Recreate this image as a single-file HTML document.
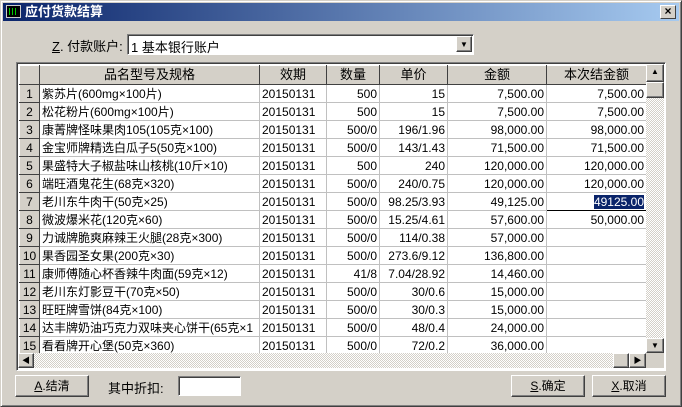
<!DOCTYPE html>
<html><head><meta charset="utf-8"><style>
*{box-sizing:border-box;margin:0;padding:0}
body{width:682px;height:407px;background:#d4d0c8;font-family:"Liberation Sans","Noto Sans CJK SC",sans-serif;font-size:12px;color:#000;position:relative;overflow:hidden}
.win{position:absolute;left:0;top:0;width:682px;height:407px;border:1px solid;border-color:#d4d0c8 #404040 #404040 #d4d0c8;box-shadow:inset 1px 1px #fff,inset -1px -1px #808080}
.title{position:absolute;left:3px;top:3px;width:676px;height:18px;background:linear-gradient(90deg,#0a246a,#a6caf0);color:#fff;font-weight:bold;font-size:13px;line-height:18px;padding-left:22px}
.ico{position:absolute;left:3px;top:2px;width:15px;height:13px;background:#000;border:1px solid #ccc}
.ico:after{content:"";position:absolute;left:2px;top:2px;width:9px;height:7px;background:repeating-linear-gradient(90deg,#0c0 0 1px,#000 1px 3px)}
.xb{position:absolute;right:3px;top:2px;width:16px;height:14px;background:#d4d0c8;border:1px solid;border-color:#fff #404040 #404040 #fff;color:#000;font-size:12px;line-height:11px;text-align:center;font-weight:bold}
.sunk{border:1px solid;border-color:#808080 #fff #fff #808080;box-shadow:inset 1px 1px #404040}
.btn{position:absolute;height:22px;background:#d4d0c8;border:1px solid;border-color:#fff #404040 #404040 #fff;box-shadow:inset -1px -1px #808080;text-align:center;line-height:20px}
.grid{position:absolute;left:16px;top:62px;width:650px;height:309px;background:#fff}
table{position:absolute;left:2px;top:2px;border-collapse:collapse;table-layout:fixed}
td,th{height:18px;border:1px solid #c0c0c0;white-space:nowrap;overflow:hidden;padding:0 2px;font-weight:normal;line-height:16px}
th{background:#d4d0c8;border:1px solid;border-color:#fff #404040 #404040 #fff;font-size:13px;height:19px}
td.n{background:#d4d0c8;border:1px solid;border-color:#fff #404040 #404040 #fff;text-align:center}
td.r{text-align:right}
.chk{background:repeating-conic-gradient(#d4d0c8 0 25%,#fff 0 50%) 0 0/2px 2px}
.sb{position:absolute;background:#d4d0c8;border:1px solid;border-color:#fff #404040 #404040 #fff;box-shadow:inset -1px -1px #808080;font-size:8px;text-align:center;line-height:14px}
</style></head><body>
<div class="win"></div>
<div class="title"><div class="ico"></div>应付货款结算<div class="xb">×</div></div>
<div style="position:absolute;left:52px;top:36px;font-size:13px"><u>Z</u>. 付款账户:</div>
<div class="sunk" style="position:absolute;left:127px;top:34px;width:347px;height:21px;background:#fff">
<span style="position:absolute;left:3px;top:2px;font-size:13px">1 基本银行账户</span>
<div class="sb" style="right:1px;top:1px;width:16px;height:16px;line-height:15px">▼</div></div>
<div class="grid sunk">
<table>
<colgroup><col style="width:20px"><col style="width:220px"><col style="width:67px"><col style="width:53px"><col style="width:68px"><col style="width:99px"><col style="width:100px"></colgroup>
<tr><th></th><th>品名型号及规格</th><th>效期</th><th>数量</th><th>单价</th><th>金额</th><th>本次结金额</th></tr>
<tr><td class="n">1</td><td>紫苏片(600mg×100片)</td><td>20150131</td><td class="r">500</td><td class="r">15</td><td class="r">7,500.00</td><td class="r">7,500.00</td></tr>
<tr><td class="n">2</td><td>松花粉片(600mg×100片)</td><td>20150131</td><td class="r">500</td><td class="r">15</td><td class="r">7,500.00</td><td class="r">7,500.00</td></tr>
<tr><td class="n">3</td><td>康菁牌怪味果肉105(105克×100)</td><td>20150131</td><td class="r">500/0</td><td class="r">196/1.96</td><td class="r">98,000.00</td><td class="r">98,000.00</td></tr>
<tr><td class="n">4</td><td>金宝师牌精选白瓜子5(50克×100)</td><td>20150131</td><td class="r">500/0</td><td class="r">143/1.43</td><td class="r">71,500.00</td><td class="r">71,500.00</td></tr>
<tr><td class="n">5</td><td>果盛特大子椒盐味山核桃(10斤×10)</td><td>20150131</td><td class="r">500</td><td class="r">240</td><td class="r">120,000.00</td><td class="r">120,000.00</td></tr>
<tr><td class="n">6</td><td>端旺酒鬼花生(68克×320)</td><td>20150131</td><td class="r">500/0</td><td class="r">240/0.75</td><td class="r">120,000.00</td><td class="r">120,000.00</td></tr>
<tr><td class="n">7</td><td>老川东牛肉干(50克×25)</td><td>20150131</td><td class="r">500/0</td><td class="r">98.25/3.93</td><td class="r">49,125.00</td><td class="r" style="border:1px solid #000"><span style="background:#0a246a;color:#fff">49125.00</span></td></tr>
<tr><td class="n">8</td><td>微波爆米花(120克×60)</td><td>20150131</td><td class="r">500/0</td><td class="r">15.25/4.61</td><td class="r">57,600.00</td><td class="r">50,000.00</td></tr>
<tr><td class="n">9</td><td>力诚牌脆爽麻辣王火腿(28克×300)</td><td>20150131</td><td class="r">500/0</td><td class="r">114/0.38</td><td class="r">57,000.00</td><td></td></tr>
<tr><td class="n">10</td><td>果香园圣女果(200克×30)</td><td>20150131</td><td class="r">500/0</td><td class="r">273.6/9.12</td><td class="r">136,800.00</td><td></td></tr>
<tr><td class="n">11</td><td>康师傅随心杯香辣牛肉面(59克×12)</td><td>20150131</td><td class="r">41/8</td><td class="r">7.04/28.92</td><td class="r">14,460.00</td><td></td></tr>
<tr><td class="n">12</td><td>老川东灯影豆干(70克×50)</td><td>20150131</td><td class="r">500/0</td><td class="r">30/0.6</td><td class="r">15,000.00</td><td></td></tr>
<tr><td class="n">13</td><td>旺旺牌雪饼(84克×100)</td><td>20150131</td><td class="r">500/0</td><td class="r">30/0.3</td><td class="r">15,000.00</td><td></td></tr>
<tr><td class="n">14</td><td>达丰牌奶油巧克力双味夹心饼干(65克×1</td><td>20150131</td><td class="r">500/0</td><td class="r">48/0.4</td><td class="r">24,000.00</td><td></td></tr>
<tr><td class="n">15</td><td>看看牌开心堡(50克×360)</td><td>20150131</td><td class="r">500/0</td><td class="r">72/0.2</td><td class="r">36,000.00</td><td></td></tr>
</table>
<div class="chk" style="position:absolute;left:629px;top:1px;width:18px;height:289px"></div>
<div class="sb" style="left:629px;top:1px;width:18px;height:18px">▲</div>
<div class="sb" style="left:629px;top:19px;width:18px;height:16px"></div>
<div class="sb" style="left:629px;top:275px;width:18px;height:15px">▼</div>
<div class="chk" style="position:absolute;left:1px;top:290px;width:628px;height:15px"></div>
<div class="sb" style="left:1px;top:290px;width:16px;height:15px">◀</div>
<div class="sb" style="left:596px;top:290px;width:16px;height:15px"></div>
<div class="sb" style="left:612px;top:290px;width:17px;height:15px">▶</div>
<div style="position:absolute;left:629px;top:290px;width:18px;height:15px;background:#d4d0c8"></div>
</div>
<div class="btn" style="left:15px;top:375px;width:74px"><u>A</u>.结清</div>
<div style="position:absolute;left:108px;top:378px;font-size:13px">其中折扣:</div>
<div class="sunk" style="position:absolute;left:178px;top:376px;width:63px;height:20px;background:#fff"></div>
<div class="btn" style="left:511px;top:375px;width:74px"><u>S</u>.确定</div>
<div class="btn" style="left:592px;top:375px;width:74px"><u>X</u>.取消</div>
</body></html>
